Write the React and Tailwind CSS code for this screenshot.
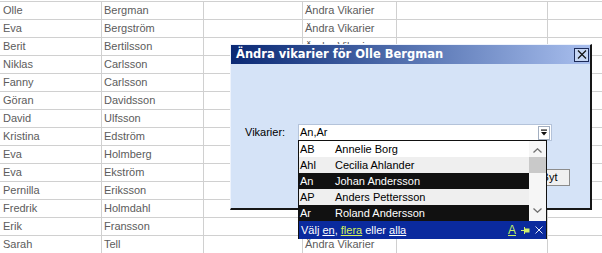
import clsx from 'clsx';

const people = [
  ['Olle', 'Bergman'],
  ['Eva', 'Bergström'],
  ['Berit', 'Bertilsson'],
  ['Niklas', 'Carlsson'],
  ['Fanny', 'Carlsson'],
  ['Göran', 'Davidsson'],
  ['David', 'Ulfsson'],
  ['Kristina', 'Edström'],
  ['Eva', 'Holmberg'],
  ['Eva', 'Ekström'],
  ['Pernilla', 'Eriksson'],
  ['Fredrik', 'Holmdahl'],
  ['Erik', 'Fransson'],
  ['Sarah', 'Tell'],
];

// rows whose "Ändra Vikarier" cell sits fully behind the dialog / list
const hidden = (i) => i >= 3 && i <= 12;

const subs = [
  { code: 'AB', name: 'Annelie Borg' },
  { code: 'Ahl', name: 'Cecilia Ahlander' },
  { code: 'An', name: 'Johan Andersson', selected: true },
  { code: 'AP', name: 'Anders Pettersson' },
  { code: 'Ar', name: 'Roland Andersson', selected: true },
];

function Sheet() {
  return (
    <div className="pt-px text-[#5c5c5c]">
      {people.map(([first, last], i) => (
        <div key={i} className="flex h-[18px] border-t border-[#d0d0d0] leading-[17px]">
          <div className="w-[102px] shrink-0 border-r border-[#d0d0d0] pl-[3px]">{first}</div>
          <div className="w-[102px] shrink-0 border-r border-[#d0d0d0] pl-[2px]">{last}</div>
          <div className="w-[99px] shrink-0 border-r border-[#d0d0d0]" />
          <div className="w-[94px] shrink-0 border-r border-[#d0d0d0] pl-[2px]">
            {hidden(i) ? '' : 'Ändra Vikarier'}
          </div>
          <div className="w-[151px] shrink-0 border-r border-[#d0d0d0]" />
          <div className="flex-1" />
        </div>
      ))}
    </div>
  );
}

function Chevron({ up }) {
  return (
    <svg width="9" height="5" viewBox="0 0 9 5" className="shrink-0">
      <path
        d={up ? 'M0.5 4.5 L4.5 0.8 L8.5 4.5' : 'M0.5 0.5 L4.5 4.2 L8.5 0.5'}
        fill="none"
        stroke="#6f6f6f"
        strokeWidth="1.3"
      />
    </svg>
  );
}

function SubList() {
  return (
    <div className="absolute left-[-1px] top-[15px] z-10 w-[249px] border-l border-r border-t border-[#111]">
      <div className="flex">
        <div className="flex-1">
          {subs.map((s, i) => (
            <div
              key={s.code}
              className={clsx(
                'flex h-[16px] items-center',
                s.selected ? 'bg-[#111] text-white' : i % 2 ? 'bg-[#efefef] text-black' : 'bg-white text-black'
              )}
            >
              <span className="w-[36px] pl-px">{s.code}</span>
              <span>{s.name}</span>
            </div>
          ))}
        </div>
        {/* scrollbar */}
        <div className="flex h-[80px] w-[17px] flex-col items-center bg-[#f6f6f6]">
          <div className="mt-[7px]"><Chevron up /></div>
          <div className="mt-[4px] h-[16px] w-full bg-[#c9c9c9]" />
          <div className="mb-[8px] mt-auto"><Chevron /></div>
        </div>
      </div>
      <div className="flex h-[18px] items-center whitespace-pre bg-[#0a2a9e] pl-[2px] pr-[3px] text-white">
        <span>Välj </span>
        <span className="underline">en</span>
        <span>, </span>
        <span className="text-[#d6f25a] underline">flera</span>
        <span> eller </span>
        <span className="underline">alla</span>
        <div className="ml-auto flex items-center gap-[5px]">
          <span className="text-[12px] leading-none text-[#c4ef66] underline">A</span>
          <svg width="9" height="7" viewBox="0 0 9 7">
            <path d="M0 3.5 H3" stroke="#d2f06c" strokeWidth="1" />
            <path d="M3.5 0 V7" stroke="#d2f06c" strokeWidth="1" />
            <rect x="4" y="1.5" width="4.5" height="4" fill="#d2f06c" />
          </svg>
          <svg width="8" height="8" viewBox="0 0 8 8">
            <path d="M0.5 0.5 L7.5 7.5 M7.5 0.5 L0.5 7.5" stroke="#dfe6f6" strokeWidth="1" />
          </svg>
        </div>
      </div>
    </div>
  );
}

function Dialog() {
  return (
    <div className="absolute left-[230px] top-[44px] flex h-[166px] w-[362px] flex-col border-b-2 border-l border-r-2 border-t border-b-[#161616] border-l-[#eef3fc] border-r-[#161616] border-t-[#eef3fc] bg-[#d5e3f7] text-black">
      {/* title bar */}
      <div className="flex h-[19px] shrink-0 items-center justify-between bg-linear-to-r from-[#0a2874] to-[#a9bfee] pl-[5px] pr-px">
        <span className="font-['DejaVu_Sans',sans-serif] text-[11.5px] font-bold text-white">
          Ändra vikarier för Olle Bergman
        </span>
        <button className="flex h-[14px] w-[15px] items-center justify-center border border-[#1b2a58] bg-[#c6d6f3]">
          <svg width="10" height="9" viewBox="0 0 10 9">
            <path d="M1 0.5 L9 8.5 M9 0.5 L1 8.5" stroke="#111" strokeWidth="1.2" />
          </svg>
        </button>
      </div>

      {/* body */}
      <div className="mt-[60px] flex h-[17px] items-center pl-[14px]">
        <span className="w-[53px]">Vikarier:</span>
        <div className="relative flex h-[17px] w-[254px] items-center border border-[#b4c3da] bg-white pl-px">
          <span>An,Ar</span>
          <div className="ml-auto mr-px flex h-[14px] w-[12px] items-center justify-center border border-[#a2aec0] bg-white">
            <svg width="6" height="7" viewBox="0 0 6 7">
              <rect x="0" y="0.5" width="6" height="1.2" fill="#111" />
              <path d="M0 3 H6 L3 6.5 Z" fill="#111" />
            </svg>
          </div>
          <SubList />
        </div>
      </div>
      <div className="mt-[28px] flex justify-end pr-[20px]">
        <button className="h-[17px] w-[41px] border border-[#8c8c8c] bg-[#f0f0f0] text-[11px] leading-[15px]">Byt</button>
      </div>
    </div>
  );
}

export default function App() {
  return (
    <div className="relative h-[253px] w-[602px] overflow-hidden bg-white font-['Liberation_Sans',Arial,sans-serif] text-[11px]">
      <Sheet />
      <Dialog />
    </div>
  );
}
